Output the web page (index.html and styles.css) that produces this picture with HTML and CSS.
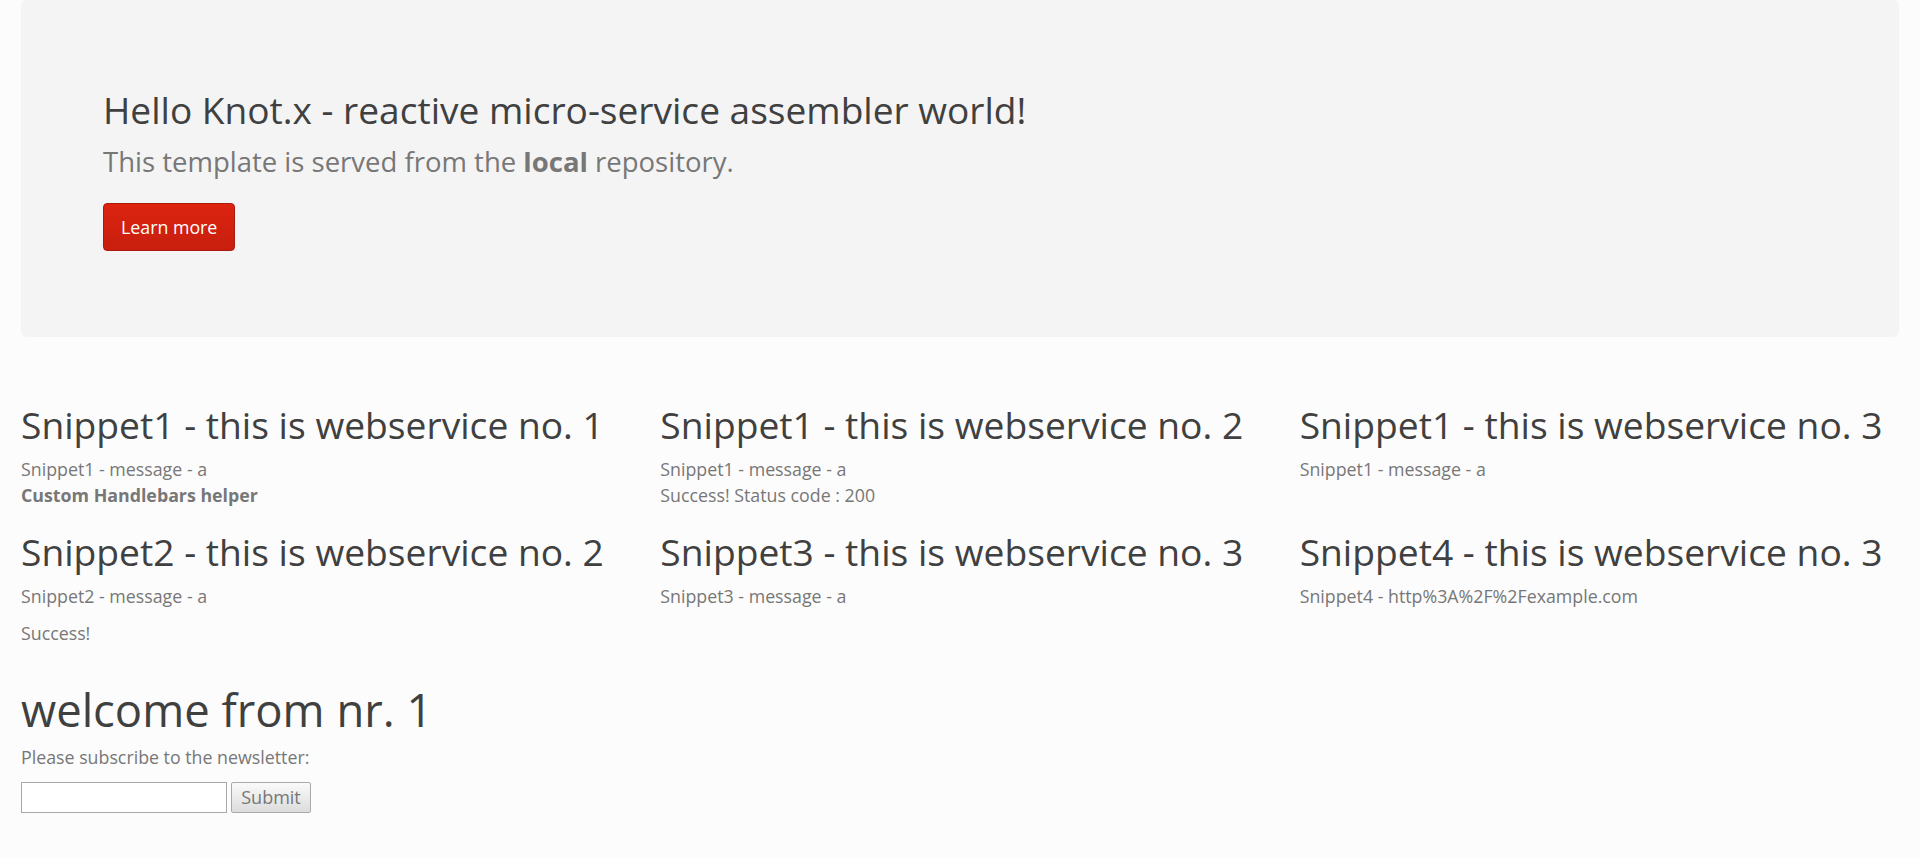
FILE: index.html
```html
<!DOCTYPE html>
<html lang="en">
<head>
<meta charset="utf-8">
<title>Knot.x</title>
<link rel="stylesheet" href="styles.css">
</head>
<body>
<div class="page">
  <div class="jumbotron">
    <h1 class="jumbo-title">Hello Knot.x - reactive micro-service assembler world!</h1>
    <p class="lead">This template is served from the <strong>local</strong> repository.</p>
    <a class="btn-primary" href="#">Learn more</a>
  </div>

  <div class="snippets">
    <div class="snippet">
      <h2 class="snippet-title">Snippet1 - this is webservice no. 1</h2>
      <div class="text">Snippet1 - message - a</div>
      <div class="text bold">Custom Handlebars helper</div>
    </div>
    <div class="snippet">
      <h2 class="snippet-title">Snippet1 - this is webservice no. 2</h2>
      <div class="text">Snippet1 - message - a</div>
      <div class="text">Success! Status code : 200</div>
    </div>
    <div class="snippet">
      <h2 class="snippet-title">Snippet1 - this is webservice no. 3</h2>
      <div class="text">Snippet1 - message - a</div>
    </div>
    <div class="snippet">
      <h2 class="snippet-title">Snippet2 - this is webservice no. 2</h2>
      <div class="text">Snippet2 - message - a</div>
      <p class="text para">Success!</p>
    </div>
    <div class="snippet">
      <h2 class="snippet-title">Snippet3 - this is webservice no. 3</h2>
      <div class="text">Snippet3 - message - a</div>
    </div>
    <div class="snippet">
      <h2 class="snippet-title">Snippet4 - this is webservice no. 3</h2>
      <div class="text">Snippet4 - http%3A%2F%2Fexample.com</div>
    </div>
  </div>

  <div class="welcome">
    <h1 class="welcome-title">welcome from nr. 1</h1>
    <p class="text">Please subscribe to the newsletter:</p>
    <form class="subscribe">
      <input class="email" type="text">
      <button class="submit" type="button">Submit</button>
    </form>
  </div>
</div>
</body>
</html>
```

FILE: styles.css
```css
html, body {
  margin: 0;
  padding: 0;
}

body {
  background: #fcfcfc;
  font-family: "Open Sans", "Noto Sans", sans-serif;
  color: #777777;
  font-size: 17.8px;
}

.page {
  padding: 0 21px;
}

.jumbotron {
  background: #f4f4f4;
  border-radius: 6px;
  padding: 90px 82px 86px;
}

.jumbo-title {
  margin: 0;
  font-size: 37.1px;
  line-height: 40px;
  font-weight: 400;
  color: #404040;
}

.lead {
  margin: 16px 0 0;
  font-size: 27.5px;
  line-height: 32px;
  font-weight: 400;
  color: #777777;
}

.lead strong {
  font-weight: 700;
}

.btn-primary {
  display: inline-block;
  margin-top: 25px;
  height: 48px;
  box-sizing: border-box;
  padding: 0 17px;
  line-height: 46px;
  font-size: 17.8px;
  color: #ffffff;
  text-decoration: none;
  border: 1px solid #a91b0c;
  border-radius: 4px;
  background: linear-gradient(#e0230f, #d9230f 10%, #c81f0e);
}

.snippets {
  display: grid;
  grid-template-columns: repeat(3, 1fr);
  column-gap: 40px;
  row-gap: 24px;
  margin-top: 68px;
}

.snippet-title {
  margin: 0 0 11px;
  font-size: 37.2px;
  line-height: 40px;
  font-weight: 400;
  color: #404040;
  white-space: nowrap;
}

.text {
  margin: 0;
  font-size: 17.8px;
  line-height: 26px;
  color: #777777;
}

.bold {
  font-weight: 700;
}

.para {
  margin-top: 11px;
}

.welcome {
  margin-top: 39px;
}

.welcome-title {
  margin: 0 0 11px;
  font-size: 45.4px;
  line-height: 48px;
  font-weight: 400;
  color: #404040;
}

.subscribe {
  margin-top: 12px;
  display: flex;
  gap: 4px;
  align-items: flex-start;
}

.email {
  width: 206px;
  height: 31px;
  box-sizing: border-box;
  border: 1px solid #a9a9a9;
  background: #ffffff;
  padding: 0 4px;
  margin: 0;
  font-family: inherit;
  font-size: 16px;
}

.submit {
  width: 80px;
  height: 31px;
  box-sizing: border-box;
  margin: 0;
  padding: 0;
  border: 1px solid #a9a9a9;
  border-radius: 2px;
  background: linear-gradient(#fafafa, #dcdcdc);
  color: #777777;
  font-family: inherit;
  font-size: 18px;
  line-height: 29px;
}
```
